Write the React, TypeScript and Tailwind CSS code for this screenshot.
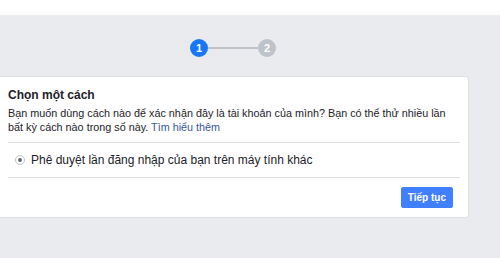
const FONT = "font-['Liberation_Sans',Arial,sans-serif]";

function Stepper() {
  return (
    <div className="flex items-center pl-[190px]">
      <div className="flex h-[18px] w-[18px] items-center justify-center rounded-full bg-[#1877f2] text-[11px] font-bold text-white">
        1
      </div>
      <div className="h-[2px] w-[50px] bg-[#bec3c9]" />
      <div className="flex h-[18px] w-[18px] items-center justify-center rounded-full bg-[#bec3c9] text-[11px] font-bold text-white">
        2
      </div>
    </div>
  );
}

function Radio() {
  return (
    <span className="flex h-[10px] w-[10px] items-center justify-center rounded-full border border-[#bec3c9] bg-white">
      <span className="h-[4px] w-[4px] rounded-full bg-[#606770]" />
    </span>
  );
}

export default function App() {
  return (
    <div className={`${FONT} h-[258px] w-[500px] overflow-hidden bg-[#e9ebee] text-[#1d2129]`}>
      <div className="h-[15px] bg-white" />
      <div className="pt-[24px]">
        <Stepper />
      </div>
      <div className="ml-[-4px] mt-[19px] w-[473px] rounded-[3px] border border-[#dddfe2] bg-white">
        <div className="pl-[11px] pr-[8px] pt-[10px]">
          <h2 className="text-[12px] font-bold leading-[16px]">Chọn một cách</h2>
          <p className="mt-[3px] text-[10.8px] leading-[14px]">
            Bạn muốn dùng cách nào để xác nhận đây là tài khoản của mình? Bạn có thể thử nhiều lần bất kỳ cách nào trong số này.{" "}
            <a className="text-[#365899]">Tìm hiểu thêm</a>
          </p>
          <div className="mt-[8px] border-t border-[#dadde1]" />
          <label className="flex h-[34px] items-center gap-[6px] pl-[7px] text-[12px]">
            <Radio />
            <span>Phê duyệt lần đăng nhập của bạn trên máy tính khác</span>
          </label>
          <div className="border-t border-[#dadde1]" />
        </div>
        <div className="flex justify-end pb-[9px] pr-[15px] pt-[9px]">
          <button
            type="button"
            className="h-[21px] rounded-[2px] border border-[#4080ff] bg-[#4080ff] px-[6px] text-[10px] font-bold text-white"
          >
            Tiếp tục
          </button>
        </div>
      </div>
    </div>
  );
}
